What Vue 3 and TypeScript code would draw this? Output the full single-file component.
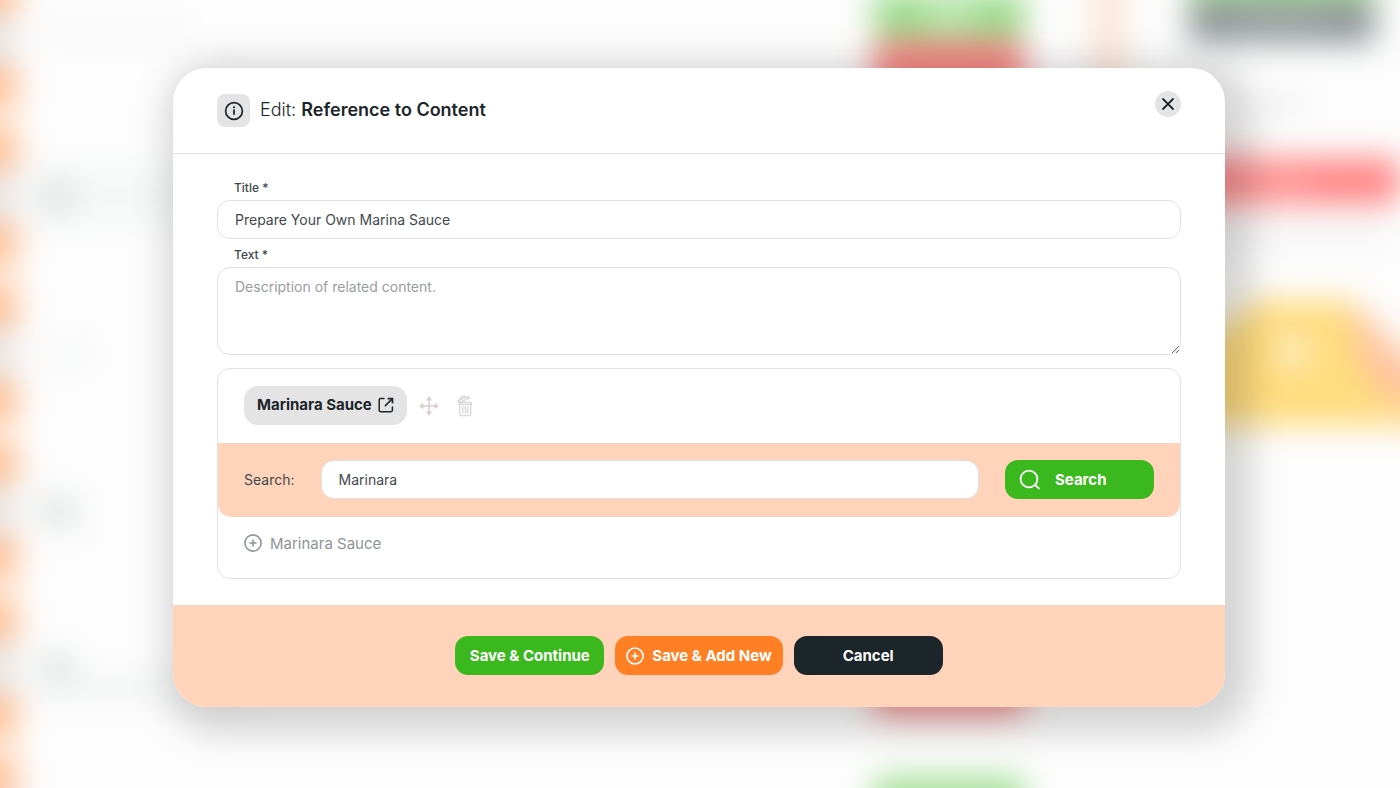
<script setup lang="ts">
import { ref } from 'vue'

const title = ref('Prepare Your Own Marina Sauce')
const text = ref('')
const query = ref('Marinara')
const selected = ref<string[]>(['Marinara Sauce'])
const results = ref<string[]>(['Marinara Sauce'])

const railGroups: number[] = [-39, 118, 275, 432, 589, 747]
</script>

<template>
  <div class="page">
    <svg class="backdrop" viewBox="0 0 1400 788" preserveAspectRatio="xMidYMid slice" aria-hidden="true">
      <defs>
        <filter id="soft" x="-100" y="-100" width="1600" height="988" filterUnits="userSpaceOnUse" color-interpolation-filters="sRGB">
          <feGaussianBlur stdDeviation="16" />
        </filter>
      </defs>
      <g filter="url(#soft)">
        <rect x="-60" y="-60" width="1520" height="908" fill="#fdfdfd" />
        <rect x="-60" y="-60" width="76" height="908" fill="#e8e6e5" />
        <g v-for="y in railGroups" :key="y">
          <rect x="-60" :y="y - 50" width="76" height="100" fill="#fff0e4" />
          <rect x="-60" :y="y - 52" width="78" height="40" rx="8" fill="#ffbc8e" />
          <rect x="-60" :y="y + 12" width="78" height="40" rx="8" fill="#ffbc8e" />
        </g>
        <rect x="40" y="28" width="150" height="12" fill="#f2f2f2" />
        <rect x="34" y="165" width="220" height="62" fill="#f6f7f7" />
        <circle cx="56" cy="197" r="15" fill="#d0d9d6" />
        <rect x="40" y="340" width="50" height="26" fill="#f5f6f6" />
        <circle cx="56" cy="510" r="15" fill="#d0d9d6" />
        <rect x="62" y="512" width="22" height="18" fill="#ebedec" />
        <circle cx="56" cy="668" r="15" fill="#d0d9d6" />
        <rect x="34" y="675" width="220" height="24" fill="#f1f2f2" />
        <rect x="873" y="-8" width="152" height="48" rx="10" fill="#9bdb8d" />
        <rect x="925" y="2" width="50" height="26" fill="#c2ebb8" />
        <rect x="873" y="40" width="152" height="72" rx="10" fill="#f98888" />
        <rect x="873" y="660" width="152" height="54" rx="10" fill="#f98888" />
        <rect x="873" y="777" width="152" height="70" rx="10" fill="#a2de95" />
        <rect x="1094" y="-60" width="30" height="300" fill="#fbe2d4" />
        <rect x="1188" y="-60" width="188" height="60" fill="#a9dd9d" />
        <rect x="1188" y="0" width="188" height="44" rx="10" fill="#909698" />
        <rect x="1240" y="16" width="80" height="14" fill="#a4a9a9" />
        <rect x="1255" y="98" width="52" height="14" fill="#e8eae9" />
        <rect x="1150" y="158" width="250" height="46" rx="10" fill="#ff8484" />
        <rect x="1240" y="174" width="70" height="14" fill="#ffa6a6" />
        <rect x="1150" y="222" width="240" height="24" fill="#f4f4f4" />
        <path d="M1256 300H1352L1440 388V426H1190V352Z" fill="#ffdc7e" />
        <path d="M1352 302L1440 390V404H1395Q1350 372 1352 302Z" fill="#ffc2a0" />
        <circle cx="1293" cy="352" r="16" fill="#faf2d8" />
      </g>
    </svg>

    <section class="modal" role="dialog" aria-modal="true" aria-labelledby="dialog-title">
      <header class="head">
        <span class="info">
          <svg width="20" height="20" viewBox="0 0 20 20" fill="none" stroke="#1c252a" aria-hidden="true">
            <circle cx="10" cy="10" r="8.4" stroke-width="1.7" />
            <path d="M10 8.6V13.8" stroke-width="1.8" />
            <circle cx="10" cy="6.3" r="1.1" fill="#1c252a" stroke="none" />
          </svg>
        </span>
        <h1 id="dialog-title">Edit: <strong>Reference to Content</strong></h1>
        <button class="close" type="button" aria-label="Close">
          <svg width="14" height="14" viewBox="0 0 14 14" fill="none" stroke="#1c252a" stroke-width="1.8" stroke-linecap="round" aria-hidden="true">
            <path d="M2 2L12 12M12 2L2 12" />
          </svg>
        </button>
      </header>

      <div class="body">
        <div class="field">
          <label for="title">Title *</label>
          <input id="title" v-model="title" type="text" />
        </div>
        <div class="field">
          <label for="text">Text *</label>
          <textarea id="text" v-model="text" placeholder="Description of related content."></textarea>
        </div>

        <div class="picker">
          <div v-for="item in selected" :key="item" class="picked">
            <a class="tag" href="#">
              {{ item }}
              <svg width="16" height="16" viewBox="0 0 16 16" fill="none" stroke="#1c252a" stroke-width="1.5" aria-hidden="true">
                <path d="M6 1.5H2.6Q1.2 1.5 1.2 2.9V13.3Q1.2 14.7 2.6 14.7H13Q14.4 14.7 14.4 13.3V10" stroke-linecap="round" />
                <path d="M7.4 8.6L13.4 2.6" stroke-linecap="round" />
                <path d="M9.6 0.7H15.3V6.4L13.6 6.2V3.6L12.4 2.4H9.6Z" fill="#1c252a" stroke="none" />
              </svg>
            </a>
            <button class="tool" type="button" aria-label="Move">
              <svg width="20" height="20" viewBox="0 0 20 20" fill="none" stroke="#d9cdcd" stroke-width="1.5" aria-hidden="true">
                <path d="M10 2V18M2 10H18" />
                <path d="M10 0L13 4.4H7ZM10 20L13 15.6H7ZM0 10L4.4 7V13ZM20 10L15.6 7V13Z" fill="#d9cdcd" stroke="none" />
              </svg>
            </button>
            <button class="tool" type="button" aria-label="Delete">
              <svg width="16" height="22" viewBox="0 0 16 22" fill="none" stroke="#cdd0cf" stroke-width="1.1" stroke-linejoin="round" stroke-linecap="round" aria-hidden="true">
                <path d="M1 5.6L11.6 1.6L12.4 3.3L1.7 7.4Z" />
                <path d="M3.6 4.4L3.2 2.8L7.4 1L8.4 2.6" />
                <path d="M2 9.2Q2 7.2 4 7.2H12.6Q14.6 7.2 14.6 9.2Z" />
                <path d="M2.8 9.2V18.4Q2.8 20.8 5.2 20.8H11.4Q13.8 20.8 13.8 18.4V9.2" />
                <path d="M5.8 11V18.2M8.3 11V18.2M10.8 11V18.2" />
              </svg>
            </button>
          </div>

          <form class="search" @submit.prevent>
            <label for="query">Search:</label>
            <input id="query" v-model="query" type="text" />
            <button class="btn green find" type="submit">
              <svg width="22" height="22" viewBox="0 0 22 22" fill="none" stroke="#fff" stroke-width="1.8" stroke-linecap="round" aria-hidden="true">
                <circle cx="10" cy="10" r="8.4" />
                <path d="M16 16L20 19.4" />
              </svg>
              Search
            </button>
          </form>

          <ul class="results">
            <li v-for="item in results" :key="item">
              <button type="button">
                <svg width="18" height="18" viewBox="0 0 18 18" fill="none" stroke="currentColor" stroke-width="1.6" stroke-linecap="round" aria-hidden="true">
                  <circle cx="9" cy="9" r="8.1" />
                  <path d="M9 6V12M6 9H12" />
                </svg>
                {{ item }}
              </button>
            </li>
          </ul>
        </div>
      </div>

      <footer class="foot">
        <button class="btn green" type="button">Save &amp; Continue</button>
        <button class="btn orange" type="button">
          <svg width="18" height="18" viewBox="0 0 18 18" fill="none" stroke="#fff" stroke-width="1.6" stroke-linecap="round" aria-hidden="true">
            <circle cx="9" cy="9" r="8" />
            <path d="M9 6V12M6 9H12" />
          </svg>
          Save &amp; Add New
        </button>
        <button class="btn dark" type="button">Cancel</button>
      </footer>
    </section>
  </div>
</template>

<style>
body {
  background: #fdfdfd;
}
</style>

<style scoped>
* {
  box-sizing: border-box;
}

.page {
  position: relative;
  min-height: 100vh;
  padding: 68px 175px 80px 173px;
  overflow: hidden;
  color: #1c252a;
  font-family: Inter, "Open Sans", sans-serif;
}

.backdrop {
  position: absolute;
  inset: 0;
  width: 100%;
  height: 100%;
}

.modal {
  position: relative;
  overflow: hidden;
  border-radius: 34px;
  background: #fff;
  box-shadow: 10px 10px 36px 16px rgba(0, 0, 0, 0.17);
}

button,
input,
textarea {
  font-family: inherit;
}

button {
  padding: 0;
  border: 0;
  background: none;
  cursor: pointer;
}

svg {
  flex: none;
  display: block;
}

.head {
  display: flex;
  align-items: flex-start;
  gap: 10px;
  min-height: 86px;
  padding: 23px 44px 26px;
  border-bottom: 1px solid #e0e0e0;
}

.info {
  display: grid;
  place-items: center;
  width: 33px;
  height: 33px;
  margin-top: 3px;
  border-radius: 8px;
  background: #e4e4e4;
}

h1 {
  flex: 1;
  margin: 7px 0 0;
  font-size: 18px;
  font-weight: 300;
  line-height: 24px;
}

h1 strong {
  font-weight: 600;
}

.close {
  display: grid;
  place-items: center;
  width: 26px;
  height: 26px;
  border-radius: 50%;
  background: #e4e4e4;
}

.body {
  padding: 26px 44px;
}

.field {
  margin-bottom: 8px;
}

.field label {
  display: block;
  margin: 0 17px 4px;
  font-size: 12px;
  font-weight: 500;
  line-height: 16px;
  color: #3f474b;
}

input,
textarea {
  display: block;
  width: 100%;
  border: 1px solid #e0e0e0;
  border-radius: 13px;
  outline: none;
  background: #fff;
  color: #42494d;
  font-size: 14px;
  font-weight: 400;
}

input {
  height: 39px;
  padding: 0 17px;
}

textarea {
  height: 88px;
  padding: 10px 17px;
  line-height: 18px;
  resize: vertical;
}

textarea::placeholder {
  color: #9a9d9f;
  opacity: 1;
}

.picker {
  margin-top: 13px;
  border: 1px solid #e2e2e2;
  border-radius: 13px;
}

.picked {
  display: flex;
  align-items: center;
  gap: 12px;
  padding: 17px 26px 18px;
}

.tag {
  display: flex;
  align-items: center;
  gap: 6px;
  height: 39px;
  padding: 0 13px 2px;
  border-radius: 14px;
  background: #e4e4e4;
  color: #1c252a;
  font-size: 15px;
  font-weight: 700;
  text-decoration: none;
}

.tool + .tool {
  margin-left: 6px;
}

.search {
  display: flex;
  align-items: center;
  gap: 26px;
  padding: 17px 26px 18px;
  border-radius: 0 0 13px 13px;
  background: #ffd4bb;
  color: #42494d;
  font-size: 14px;
}

.search input {
  flex: 1;
  min-width: 0;
}

.results {
  margin: 0;
  padding: 16px 26px 25px;
  list-style: none;
}

.results button {
  display: flex;
  align-items: center;
  gap: 8px;
  height: 20px;
  color: #8f9496;
  font-size: 15px;
  font-weight: 400;
}

.btn {
  display: flex;
  align-items: center;
  justify-content: center;
  gap: 8px;
  min-width: 149px;
  height: 39px;
  padding: 0 11px;
  border-radius: 13px;
  color: #fff;
  font-size: 15px;
  font-weight: 700;
  white-space: nowrap;
}

.green {
  background: #3cb81f;
}

.orange {
  background: #ff7f24;
}

.dark {
  background: #1c252a;
}

.find {
  justify-content: flex-start;
  gap: 14px;
  padding: 0 14px;
}

.foot {
  display: flex;
  justify-content: center;
  gap: 11px;
  padding: 31px 44px 32px;
  background: #ffd4bb;
}
</style>
